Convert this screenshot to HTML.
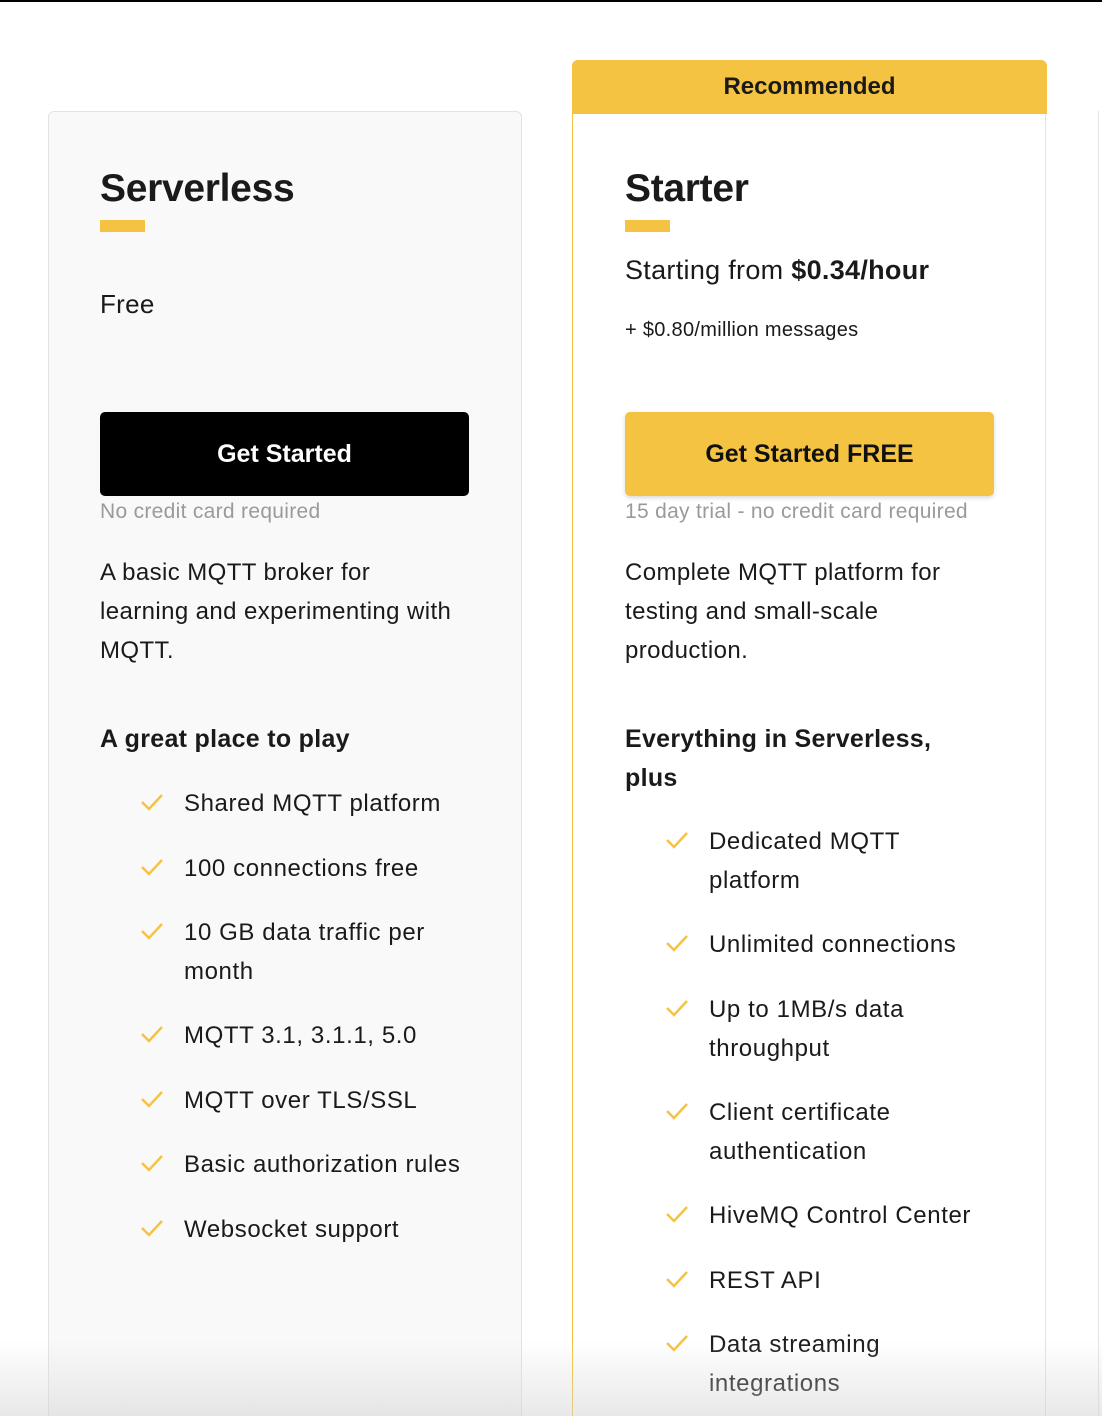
<!DOCTYPE html>
<html><head><meta charset="utf-8"><style>
*{margin:0;padding:0;box-sizing:border-box}
html,body{width:1102px;height:1416px;overflow:hidden}
body{background:#fff;font-family:"Liberation Sans",Arial,sans-serif;color:#1a1a1a;position:relative}
.a{position:absolute;white-space:nowrap}
.card{position:absolute;border:1px solid #e3e3e3;border-radius:6px 6px 0 0}
.t{font-size:39px;font-weight:bold;letter-spacing:-0.3px}
.bar{position:absolute;width:45px;height:12px;background:#f4c342}
.btn{position:absolute;width:369px;height:84px;border-radius:5px;font-size:25px;font-weight:bold;text-align:center;line-height:84px}
.note{font-size:21px;color:#9a9a9a;letter-spacing:0.3px}
.p{font-size:24px;line-height:39px;letter-spacing:0.4px}
.h{font-size:25px;font-weight:900;line-height:39px;white-space:normal;letter-spacing:0.3px}
.f{font-size:24px;line-height:39px;white-space:normal;letter-spacing:0.6px}
.ck{position:absolute;width:24px;height:18px}
</style></head><body>
<div class="a" style="left:0;top:0;width:1102px;height:2px;background:#000"></div>
<div class="card" style="left:48px;top:111px;width:474px;height:1320px;background:#f9f9f9"></div>
<div class="card" style="left:572px;top:60px;width:474px;height:1370px;background:#fff;border-left-color:#f4c342"></div>
<div class="a" style="left:572px;top:60px;width:475px;height:54px;background:#f4c342;border-radius:6px 6px 0 0;text-align:center;font-size:24px;font-weight:bold;line-height:54px">Recommended</div>
<div class="a" style="left:1098px;top:111px;width:10px;height:1320px;border-left:1px solid #e3e3e3"></div>

<div class="a t" style="left:100px;top:167px">Serverless</div>
<div class="bar" style="left:100px;top:220px"></div>
<div class="a" style="left:100px;top:289px;font-size:26px;letter-spacing:0.3px">Free</div>
<div class="btn" style="left:100px;top:412px;background:#000;color:#fff">Get Started</div>
<div class="a note" style="left:100px;top:500px">No credit card required</div>
<div class="a p" style="left:100px;top:553px">A basic MQTT broker for<br>learning and experimenting with<br>MQTT.</div>
<div class="a h" style="left:100px;top:720px;width:380px">A great place to play</div>

<div class="a t" style="left:625px;top:167px">Starter</div>
<div class="bar" style="left:625px;top:220px"></div>
<div class="a" style="left:625px;top:255px;font-size:27px;letter-spacing:0.3px">Starting from <b>$0.34/hour</b></div>
<div class="a" style="left:625px;top:319px;font-size:20px;letter-spacing:0.3px">+ $0.80/million messages</div>
<div class="btn" style="left:625px;top:412px;background:#f4c342;color:#111;box-shadow:0 2px 4px rgba(0,0,0,.15)">Get Started FREE</div>
<div class="a note" style="left:625px;top:500px">15 day trial - no credit card required</div>
<div class="a p" style="left:625px;top:553px">Complete MQTT platform for<br>testing and small-scale<br>production.</div>
<div class="a h" style="left:625px;top:720px;width:320px">Everything in Serverless, plus</div>

<div id="L"></div>
<script>
const ck='<svg viewBox="0 0 24 18" width="24" height="18"><path d="M2 9 L9 16 L22 2" fill="none" stroke="#f4c342" stroke-width="2.5"/></svg>';
const items=[[100,784,"Shared MQTT platform"],[100,849,"100 connections free"],[100,913,"10 GB data traffic per month"],[100,1016,"MQTT 3.1, 3.1.1, 5.0"],[100,1081,"MQTT over TLS/SSL"],[100,1145,"Basic authorization rules"],[100,1210,"Websocket support"],
[625,822,"Dedicated MQTT platform"],[625,925,"Unlimited connections"],[625,990,"Up to 1MB/s data throughput"],[625,1093,"Client certificate authentication"],[625,1196,"HiveMQ Control Center"],[625,1261,"REST API"],[625,1325,"Data streaming integrations"]];
let h='';
for(const [x,y,t] of items){
 h+='<div class="ck" style="left:'+(x+40)+'px;top:'+(y+9)+'px">'+ck+'</div>';
 h+='<div class="a f" style="left:'+(x+84)+'px;top:'+y+'px;width:'+(x==100?300:270)+'px">'+t+'</div>';
}
document.getElementById('L').innerHTML=h;
</script>
<div class="a" style="left:0;top:1340px;width:1102px;height:76px;background:linear-gradient(rgba(210,210,210,0),rgba(210,210,210,.5))"></div>
</body></html>
